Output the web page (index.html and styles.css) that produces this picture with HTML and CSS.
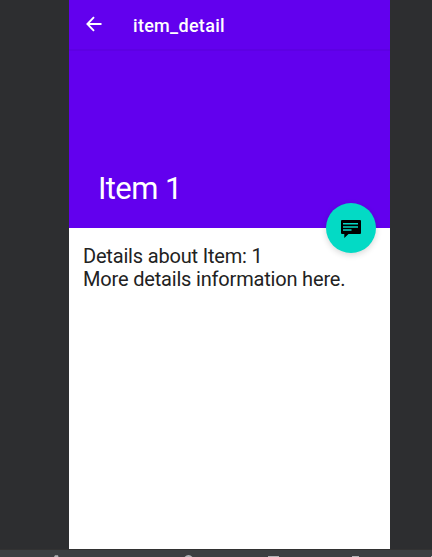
FILE: index.html
```html
<!DOCTYPE html>
<html lang="en">
<head>
<meta charset="utf-8">
<title>item_detail</title>
<link rel="stylesheet" href="styles.css">
</head>
<body>
<div class="stage">
  <main class="screen">
    <header class="toolbar">
      <svg class="back" viewBox="0 0 16 16"><path d="M8 1.2 1.4 8 8 14.8M1.4 8H15.5"/></svg>
      <span class="title">item_detail</span>
    </header>
    <section class="hero">
      <h1 class="heading">Item 1</h1>
      <button class="fab" aria-label="Message">
        <svg class="chat" viewBox="0 0 20 18"><path d="M1 0H19Q20 0 20 1V13Q20 14 19 14H7.5L3.3 18V14H1Q0 14 0 13V1Q0 0 1 0Z"/><path class="lines" d="M2 3.7H17M2 6.9H17M2 10.1H10.5"/></svg>
      </button>
    </section>
    <p class="details">Details about Item: 1<br>More details information here.</p>
  </main>
</div>
<footer class="navbar">
  <svg class="nav-icons" viewBox="0 0 432 8"><path d="M54 8 55 6.2H58L58.5 8ZM184.500 8Q188.500 4 192.500 8ZM268 7H279V8H268ZM352 7H359V8H352ZM431 7H432V8H431Z"/></svg>
</footer>
</body>
</html>
```
FILE: styles.css
```css
* { box-sizing: border-box; }
body {
  margin: 0;
  height: 557px;
  display: flex;
  flex-direction: column;
  overflow: hidden;
  background: #2d2e30;
  font-family: Roboto, sans-serif;
}
.stage {
  height: 549px;
  display: flex;
  padding-left: 69px;
}
.screen {
  width: 321px;
  background: #fff;
  overflow: hidden;
}
.toolbar {
  height: 51px;
  display: flex;
  align-items: center;
  padding: 0 16px 2px;
  background: linear-gradient(#6200ee 49px, #5d00e3 49px);
  color: #fff;
}
.back {
  width: 16px;
  height: 16px;
  margin: -1px 31px 0 1px;
  fill: none;
  stroke: #fff;
  stroke-width: 1.9;
}
.title {
  font-size: 18px;
  font-weight: 500;
  line-height: 24px;
  letter-spacing: .3px;
  margin-top: 2px;
}
.hero {
  position: relative;
  height: 177px;
  display: flex;
  align-items: flex-end;
  padding: 0 28px 21px;
  background: #6200ee;
}
.heading {
  margin: 0 0 0 1px;
  color: #fff;
  font-size: 31px;
  font-weight: 400;
  line-height: 36px;
  letter-spacing: -.6px;
}
.fab {
  position: absolute;
  right: 14px;
  bottom: -25px;
  width: 50px;
  height: 50px;
  display: grid;
  place-items: center;
  padding: 2px 0 0;
  border: 0;
  border-radius: 50%;
  background: #03dac5;
  box-shadow: 0 2px 6px rgba(0, 0, 0, .16);
}
.chat {
  width: 20px;
  height: 18px;
}
.lines {
  fill: none;
  stroke: #03dac5;
  stroke-width: 1.5;
}
.details {
  margin: 0;
  padding: 17px 14px;
  color: #222;
  font-size: 20px;
  line-height: 23px;
  letter-spacing: -.18px;
}
.navbar {
  height: 8px;
  background: #3c3f41;
  border-top: 1px solid #323232;
}
.nav-icons {
  display: block;
  width: 432px;
  height: 8px;
  margin-top: -1px;
  fill: #afb1b3;
}
```
